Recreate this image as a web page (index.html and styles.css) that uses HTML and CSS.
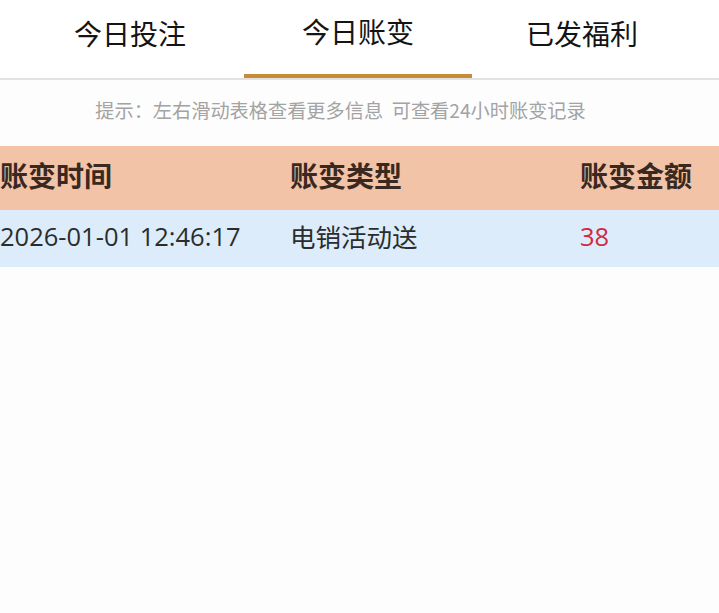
FILE: index.html
```html
<!DOCTYPE html>
<html lang="zh-CN">
<head>
<meta charset="utf-8">
<link rel="stylesheet" href="styles.css">
</head>
<body>
<div class="tabs">
  <div class="tab">今日投注</div>
  <div class="tab active">今日账变</div>
  <div class="tab last">已发福利</div>
</div>
<p class="hint">提示：左右滑动表格查看更多信息&nbsp;&nbsp;可查看24小时账变记录</p>
<div class="table-wrap">
  <div class="table">
    <div class="row head">
      <div class="cell">账变时间</div>
      <div class="cell">账变类型</div>
      <div class="cell">账变金额</div>
    </div>
    <div class="row body">
      <div class="cell">2026-01-01 12:46:17</div>
      <div class="cell">电销活动送</div>
      <div class="cell amount">38</div>
    </div>
  </div>
</div>
</body>
</html>
```
FILE: styles.css
```css
html, body {
  margin: 0;
  padding: 0;
  background: #fdfdfd;
  font-family: "Noto Sans CJK SC", "Noto Sans", sans-serif;
  width: 719px;
  overflow: hidden;
}
.tabs {
  display: flex;
  padding: 0 16px;
  height: 78px;
  border-bottom: 2px solid #e2e2e2;
  background: #fff;
}
.tab {
  width: 228px;
  font-size: 28px;
  line-height: 66px;
  text-align: center;
  color: #141414;
  box-sizing: border-box;
}
.tab.last {
  width: 220px;
}
.tab.active {
  border-bottom: 4px solid #c78c37;
  border-radius: 3px 0 0 0;
  line-height: 62px;
  height: 78px;
}
.hint {
  margin: 0;
  height: 66px;
  line-height: 60px;
  text-align: center;
  font-size: 19.2px;
  color: #a3a3a3;
  padding-right: 38px;
}
.table-wrap {
  width: 719px;
  overflow: hidden;
}
.table {
  width: 870px;
}
.row {
  display: flex;
}
.cell {
  width: 290px;
  flex: none;
  white-space: nowrap;
}
.head {
  background: #f2c3a7;
  height: 64px;
  align-items: center;
  font-size: 28px;
  font-weight: bold;
  color: #3a2920;
  box-sizing: border-box;
  padding-bottom: 6px;
}
.body {
  background: #dcecfb;
  height: 57px;
  align-items: center;
  font-family: "Open Sans", "Noto Sans CJK SC", sans-serif;
  font-size: 25.5px;
  color: #2c2c2c;
  box-sizing: border-box;
  padding-bottom: 6px;
}
.amount {
  color: #d12a3c;
}
```
